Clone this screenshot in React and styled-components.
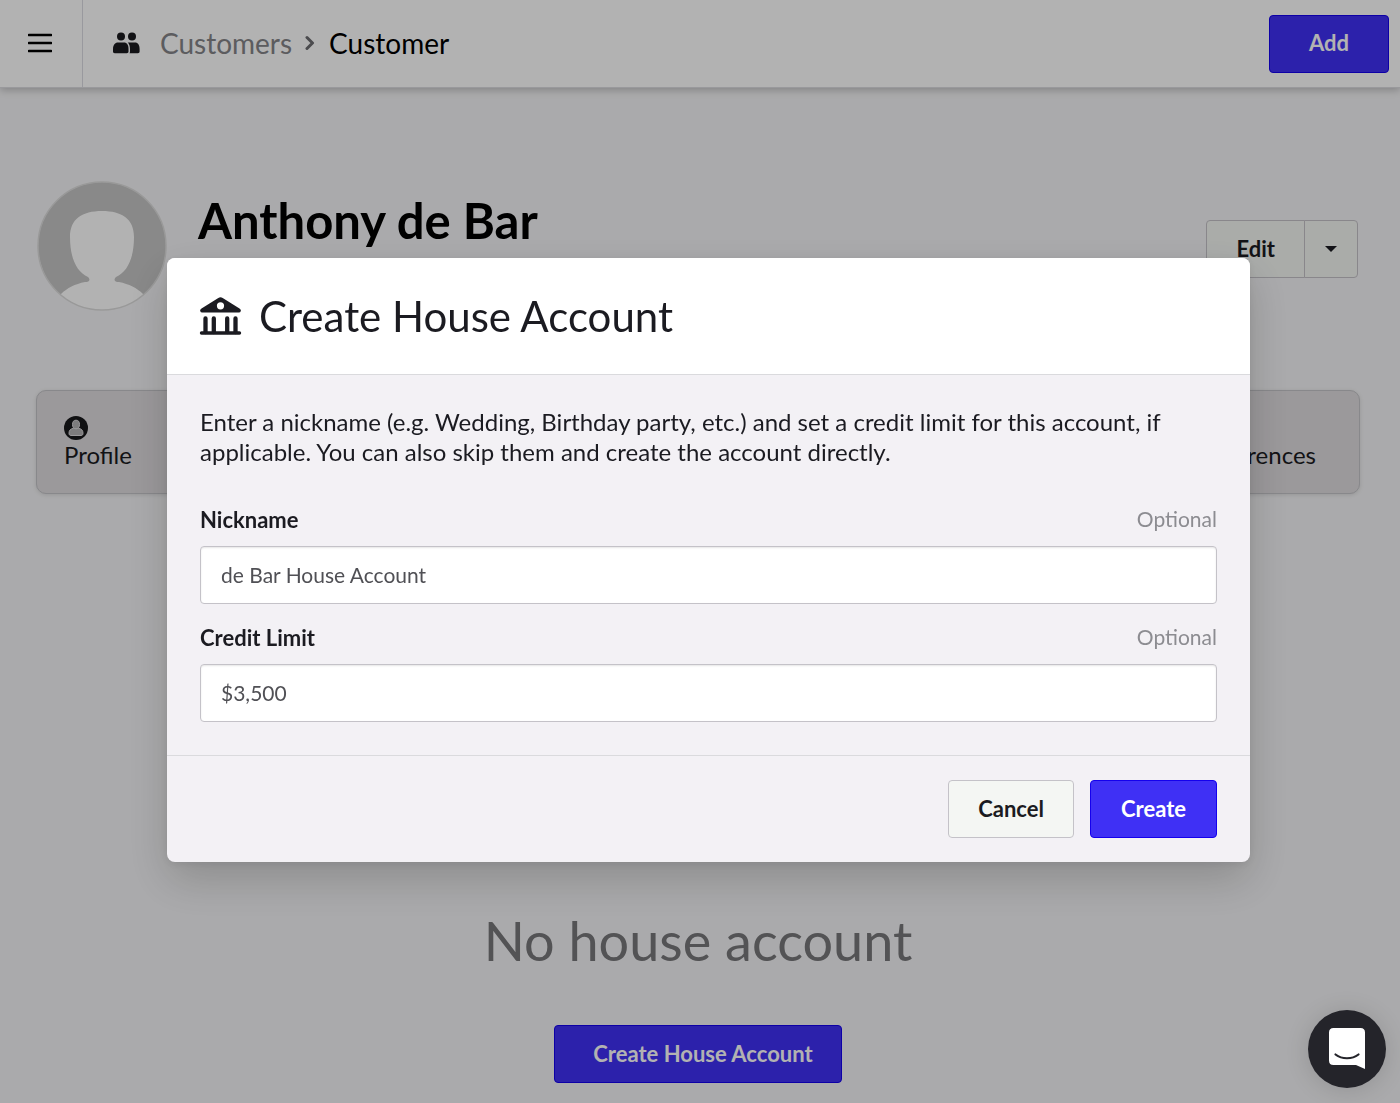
import React from 'react';
import styled, { createGlobalStyle, css } from 'styled-components';

const GlobalStyle = createGlobalStyle`
  * {
    box-sizing: border-box;
  }
  body {
    margin: 0;
    background: #f4f4f6;
    color: #000;
    font-family: Lato, 'Liberation Sans', sans-serif;
    font-size: 22px;
  }
  button,
  input {
    font: inherit;
  }
  h1,
  h2,
  p {
    margin: 0;
    font-weight: 400;
  }
  svg {
    display: block;
  }
`;

const Page = styled.div`
  display: flex;
  flex-direction: column;
  min-height: 100vh;
`;

const TopBar = styled.header`
  display: flex;
  align-items: center;
  height: 88px;
  padding-right: 11px;
  background: #fff;
  border-bottom: 1px solid #dcdce0;
  box-shadow: 0 2px 8px rgba(0, 0, 0, 0.24);
`;

const MenuButton = styled.button`
  display: flex;
  align-items: center;
  align-self: stretch;
  padding: 0 30px 2px 28px;
  background: none;
  border: 0;
  border-right: 1px solid #dcdce2;
`;

const Breadcrumb = styled.nav`
  display: flex;
  flex: 1;
  align-items: center;
  padding: 0 0 2px 30px;
  font-size: 28px;
`;

const CrumbLink = styled.a`
  margin: 0 13px 0 20px;
  color: #848488;
  text-decoration: none;
`;

const Crumb = styled.span`
  margin-left: 14px;
`;

const Button = styled.button`
  height: 58px;
  padding: 0 29px 2px;
  background: #f4f6f3;
  border: 1px solid #c4c2c8;
  border-radius: 4px;
  color: #1b1b21;
  font-weight: 700;
  ${(props) =>
    props.$primary &&
    css`
      padding: 0 30px 2px;
      background: #3f30f5;
      border-color: #1400ee;
      color: #fff;
    `}
  ${(props) =>
    props.$wide &&
    css`
      padding: 0 39px 2px;
    `}
`;

const Main = styled.main`
  display: flex;
  flex: 1;
  flex-direction: column;
  padding: 93px 40px 20px 36px;
`;

const Profile = styled.section`
  display: flex;
  align-items: center;
  padding-left: 1px;
`;

const Name = styled.h1`
  flex: 1;
  align-self: flex-start;
  margin: 10px 0 0 31px;
  font-size: 49px;
  line-height: 58px;
  font-weight: 700;
`;

const SplitButton = styled.div`
  display: flex;
  margin-right: 2px;
  padding-top: 6px;

  button:first-child {
    border-radius: 4px 0 0 4px;
  }
  button:last-child {
    margin-left: -1px;
    padding: 0 20px;
    border-radius: 0 4px 4px 0;
  }
`;

const Tabs = styled.nav`
  display: flex;
  align-items: flex-end;
  justify-content: space-between;
  height: 104px;
  margin-top: 79px;
  padding: 0 43px 23px 27px;
  background: #dedbde;
  border: 1px solid #c3c3c7;
  border-radius: 10px;
  box-shadow: 0 1px 4px rgba(0, 0, 0, 0.12);
`;

const Tab = styled.a`
  color: #1b1b1f;
  font-size: 24px;
  line-height: 30px;
  text-decoration: none;
`;

const EmptyState = styled.section`
  display: flex;
  flex-direction: column;
  align-items: center;
  margin-top: auto;
`;

const EmptyTitle = styled.h2`
  margin-bottom: 50px;
  color: #77777a;
  font-size: 54px;
  line-height: 68px;
`;

const EmptyButton = styled(Button)`
  padding: 0 28px 2px 38px;
`;

const Overlay = styled.div`
  position: fixed;
  inset: 0;
  display: flex;
  align-items: center;
  justify-content: center;
  padding: 17px 0 0 17px;
  background: rgba(0, 0, 0, 0.3);
`;

const Modal = styled.form`
  flex: 0 1 1083px;
  background: #f3f1f5;
  border-radius: 8px;
  box-shadow: 0 18px 44px rgba(0, 0, 0, 0.18), 0 2px 8px rgba(0, 0, 0, 0.08);
  color: #1b1b21;
`;

const ModalHeader = styled.header`
  display: flex;
  align-items: center;
  gap: 17px;
  height: 117px;
  padding: 0 32px;
  background: #fff;
  border-bottom: 1px solid #dadadd;
  border-radius: 8px 8px 0 0;
`;

const ModalTitle = styled.h2`
  font-size: 42px;
  line-height: 50px;
`;

const ModalBody = styled.div`
  padding: 32px 33px 33px;
`;

const Intro = styled.p`
  margin-bottom: 39px;
  font-size: 24px;
  line-height: 30px;
`;

const Field = styled.div`
  & + & {
    margin-top: 20px;
  }
`;

const FieldHead = styled.div`
  display: flex;
  justify-content: space-between;
  margin-bottom: 12px;
  line-height: 28px;
`;

const Label = styled.label`
  font-weight: 700;
`;

const Hint = styled.span`
  color: #8c8c91;
  font-size: 21px;
  line-height: 26px;
`;

const Input = styled.input`
  display: block;
  width: 100%;
  height: 58px;
  padding: 0 20px 2px;
  background: #fff;
  border: 1px solid #c4c2c8;
  border-radius: 4px;
  box-shadow: inset 0 1px 2px rgba(0, 0, 0, 0.1);
  color: #505055;
  font-size: 21px;
`;

const ModalFooter = styled.footer`
  display: flex;
  justify-content: flex-end;
  gap: 16px;
  padding: 24px 33px;
  border-top: 1px solid #dadadd;
`;

const ChatButton = styled.button`
  position: fixed;
  right: 14px;
  bottom: 15px;
  display: flex;
  align-items: center;
  justify-content: center;
  width: 78px;
  height: 78px;
  padding: 0;
  background: #24242a;
  border: 0;
  border-radius: 50%;
  box-shadow: 0 2px 24px rgba(0, 0, 0, 0.14);
`;

const MenuIcon = () => (
  <svg width="24" height="20" viewBox="0 0 24 20">
    <path d="M1 2h22M1 10h22M1 18h22" stroke="#000" strokeWidth="2.6" strokeLinecap="round" />
  </svg>
);

const PeopleIcon = () => (
  <svg width="27" height="22" viewBox="0 0 27 22" fill="#1b1b1f">
    <circle cx="8" cy="4.500" r="4" />
    <path d="M0 17c0-4 2-6.500 5-6.500h6c3 0 4.500 2.500 4.500 6.500v2.500c0 1-.7 1.700-1.700 1.700H1.700C.7 21.200 0 20.500 0 19.500z" />
    <circle cx="19" cy="4.500" r="4" />
    <path d="M14.800 10.500H22c3 0 4.600 2.500 4.600 6.500v2.500c0 1-.7 1.700-1.700 1.700h-8.400c.5-.7.5-1.300.5-2V17c0-2.800-.7-5-2.200-6.500z" />
  </svg>
);

const ChevronIcon = () => (
  <svg width="10" height="16" viewBox="0 0 10 16">
    <path d="M2 2.500L7.500 8 2 13.500" fill="none" stroke="#6c6c70" strokeWidth="3" strokeLinecap="round" strokeLinejoin="round" />
  </svg>
);

const CaretIcon = () => (
  <svg width="12" height="6" viewBox="0 0 12 6">
    <path d="M0 0h12L6 6z" fill="#1b1b21" />
  </svg>
);

const Avatar = () => (
  <svg width="130" height="130" viewBox="0 0 130 130">
    <defs>
      <clipPath id="avatar-clip">
        <circle cx="65" cy="65" r="64" />
      </clipPath>
    </defs>
    <circle cx="65" cy="65" r="64" fill="#c4c4c4" />
    <g clipPath="url(#avatar-clip)" fill="#fff">
      <path d="M65 30c20 0 32 8 32 26 0 22-7 35-18 40-3 3-1 5 3 5 10 2 18 6 24 12v20H24v-20c6-6 14-10 24-12 4 0 6-2 3-5-11-5-18-18-18-40 0-18 12-26 32-26z" />
    </g>
    <circle cx="65" cy="65" r="64" fill="none" stroke="#dcdcdc" strokeWidth="1.500" />
  </svg>
);

const ProfileIcon = () => (
  <svg width="24" height="24" viewBox="0 0 24 24">
    <circle cx="12" cy="12" r="12" fill="#18181b" />
    <g fill="#b4b2b4" stroke="#dedbde" strokeWidth="1">
      <path d="M9.200 12.300c-2.800.6-4.200 2.200-4.200 5 0 1.500.7 2.200 2 2.200h10c1.300 0 2-.7 2-2.200 0-2.800-1.400-4.400-4.200-5z" />
      <ellipse cx="12" cy="8.500" rx="3.500" ry="4.300" />
    </g>
  </svg>
);

const BankIcon = () => (
  <svg width="43" height="38" viewBox="0 0 43 38">
    <path
      fillRule="evenodd"
      fill="#1b1b21"
      d="M19.300.9q2.200-1.300 4.400 0L40.500 11.500q1.700 1.200 1.300 2.500-.4 1.500-2 1.500H3.200q-1.600 0-2-1.500Q.8 12.700 2.500 11.500zM21.500 5.200a3.600 3.600 0 1 0 0 7.200 3.600 3.600 0 0 0 0-7.200z"
    />
    <path d="M6.500 21.500V35M14.800 21.500V35M28.200 21.500V35M36.500 21.500V35" stroke="#1b1b21" strokeWidth="4.300" strokeLinecap="round" />
    <path d="M2.500 36h38" stroke="#1b1b21" strokeWidth="3.400" strokeLinecap="round" />
  </svg>
);

const ChatIcon = () => (
  <svg width="36" height="42" viewBox="0 0 36 42">
    <path d="M4.500 0h27Q36 0 36 4.500V41l-9-4H4.500Q0 37 0 32.500v-28Q0 0 4.500 0z" fill="#fff" />
    <path d="M6.500 26.500c6.500 5 16.500 5 23 0" fill="none" stroke="#24242a" strokeWidth="2.200" strokeLinecap="round" />
  </svg>
);

const FormField = ({ id, label, value }) => (
  <Field>
    <FieldHead>
      <Label htmlFor={id}>{label}</Label>
      <Hint>Optional</Hint>
    </FieldHead>
    <Input id={id} type="text" defaultValue={value} />
  </Field>
);

const App = () => {
  return (
    <>
      <GlobalStyle />
      <Page>
        <TopBar>
          <MenuButton type="button" aria-label="Menu">
            <MenuIcon />
          </MenuButton>
          <Breadcrumb>
            <PeopleIcon />
            <CrumbLink href="#customers">Customers</CrumbLink>
            <ChevronIcon />
            <Crumb>Customer</Crumb>
          </Breadcrumb>
          <Button type="button" $primary $wide>
            Add
          </Button>
        </TopBar>
        <Main>
          <Profile>
            <Avatar />
            <Name>Anthony de Bar</Name>
            <SplitButton>
              <Button type="button">Edit</Button>
              <Button type="button" aria-label="More actions">
                <CaretIcon />
              </Button>
            </SplitButton>
          </Profile>
          <Tabs>
            <Tab href="#profile">
              <ProfileIcon />
              Profile
            </Tab>
            <Tab href="#preferences">Preferences</Tab>
          </Tabs>
          <EmptyState>
            <EmptyTitle>No house account</EmptyTitle>
            <EmptyButton type="button" $primary>
              Create House Account
            </EmptyButton>
          </EmptyState>
        </Main>
      </Page>
      <Overlay>
        <Modal role="dialog" aria-labelledby="modal-title" onSubmit={(e) => e.preventDefault()}>
          <ModalHeader>
            <BankIcon />
            <ModalTitle id="modal-title">Create House Account</ModalTitle>
          </ModalHeader>
          <ModalBody>
            <Intro>
              Enter a nickname (e.g. Wedding, Birthday party, etc.) and set a credit limit for this
              account, if applicable. You can also skip them and create the account directly.
            </Intro>
            <FormField id="nickname" label="Nickname" value="de Bar House Account" />
            <FormField id="credit-limit" label="Credit Limit" value="$3,500" />
          </ModalBody>
          <ModalFooter>
            <Button type="button">Cancel</Button>
            <Button type="submit" $primary>
              Create
            </Button>
          </ModalFooter>
        </Modal>
      </Overlay>
      <ChatButton type="button" aria-label="Open chat">
        <ChatIcon />
      </ChatButton>
    </>
  );
};

export default App;
